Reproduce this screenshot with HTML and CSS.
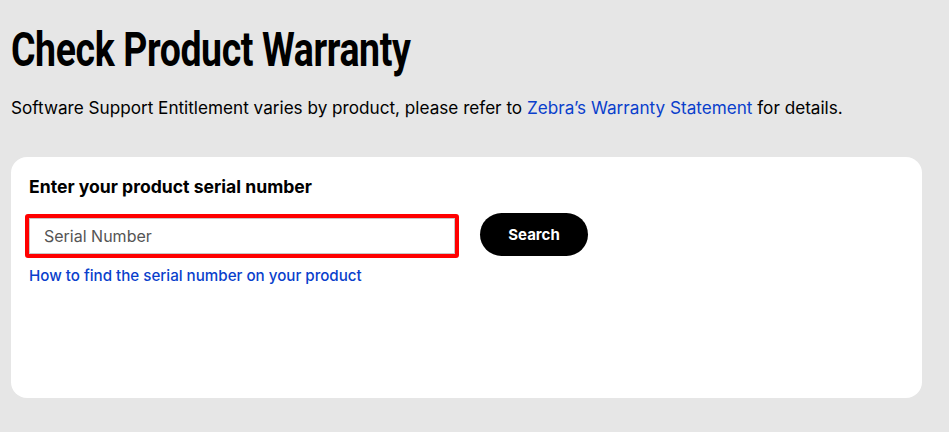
FILE: index.html
```html
<!DOCTYPE html>
<html>
    <head>
        <title>Check Product Warranty</title>
        <link rel="stylesheet" href="styles.css">
    </head>
    <body>
        <div class="page">
            <h1 class="title"><span class="title-text">Check Product Warranty</span></h1>
            <p class="intro">Software Support Entitlement varies by product, please refer to <a href="#" class="link">Zebra’s Warranty Statement</a> for details.</p>

            <div class="card">
                <label class="card-label" for="serial">Enter your product serial number</label>
                <div class="search-row">
                    <div class="field">
                        <input id="serial" class="serial-input" type="text" placeholder="Serial Number">
                    </div>
                    <button class="search-btn">Search</button>
                </div>
                <a href="#" class="help-link">How to find the serial number on your product</a>
            </div>
        </div>
    </body>
</html>
```

FILE: styles.css
```css
body {
  margin: 0;
  background: #e6e6e6;
  font-family: Inter, "Liberation Sans", sans-serif;
  color: #000;
}

.page {
  padding: 0 27px 0 11px;
}

.title {
  margin: 0;
  padding-top: 22px;
  font-family: Roboto, "Liberation Sans", sans-serif;
  font-weight: 700;
  font-size: 48px;
  line-height: 56px;
  letter-spacing: -0.5px;
  white-space: nowrap;
}

/* narrow the heading to a condensed look */
.title-text {
  display: inline-block;
  transform: scaleX(0.78);
  transform-origin: left center;
}

.intro {
  margin: 18px 0 0;
  font-size: 17.15px;
  line-height: 24px;
}

.link {
  color: #0a3fcc;
  text-decoration: none;
}

.card {
  margin-top: 37px;
  background: #fff;
  border-radius: 16px;
  height: 241px;
  box-sizing: border-box;
  padding: 18px 18px;
}

.card-label {
  display: block;
  font-weight: 700;
  font-size: 17.6px;
  line-height: 24px;
}

.search-row {
  display: flex;
  align-items: center;
  gap: 21px;
  margin-top: 15px;
}

.field {
  margin-left: -4px;
  border: 4px solid #ff0000;
  border-radius: 3px;
}

.serial-input {
  display: block;
  width: 426px;
  height: 36px;
  box-sizing: border-box;
  border: 1px solid #c8c8c8;
  padding: 0 14px;
  font-family: Inter, "Liberation Sans", sans-serif;
  font-size: 16px;
  color: #333;
  outline: none;
}

.serial-input::placeholder {
  color: #555;
}

.search-btn {
  width: 108px;
  height: 43px;
  border: none;
  border-radius: 22px;
  background: #000;
  color: #fff;
  font-family: Inter, "Liberation Sans", sans-serif;
  font-weight: 700;
  font-size: 15px;
  margin-top: -4px;
}

.help-link {
  display: inline-block;
  margin-top: 8px;
  color: #0a3fcc;
  font-size: 15.15px;
  font-weight: 500;
  text-decoration: none;
}
```
